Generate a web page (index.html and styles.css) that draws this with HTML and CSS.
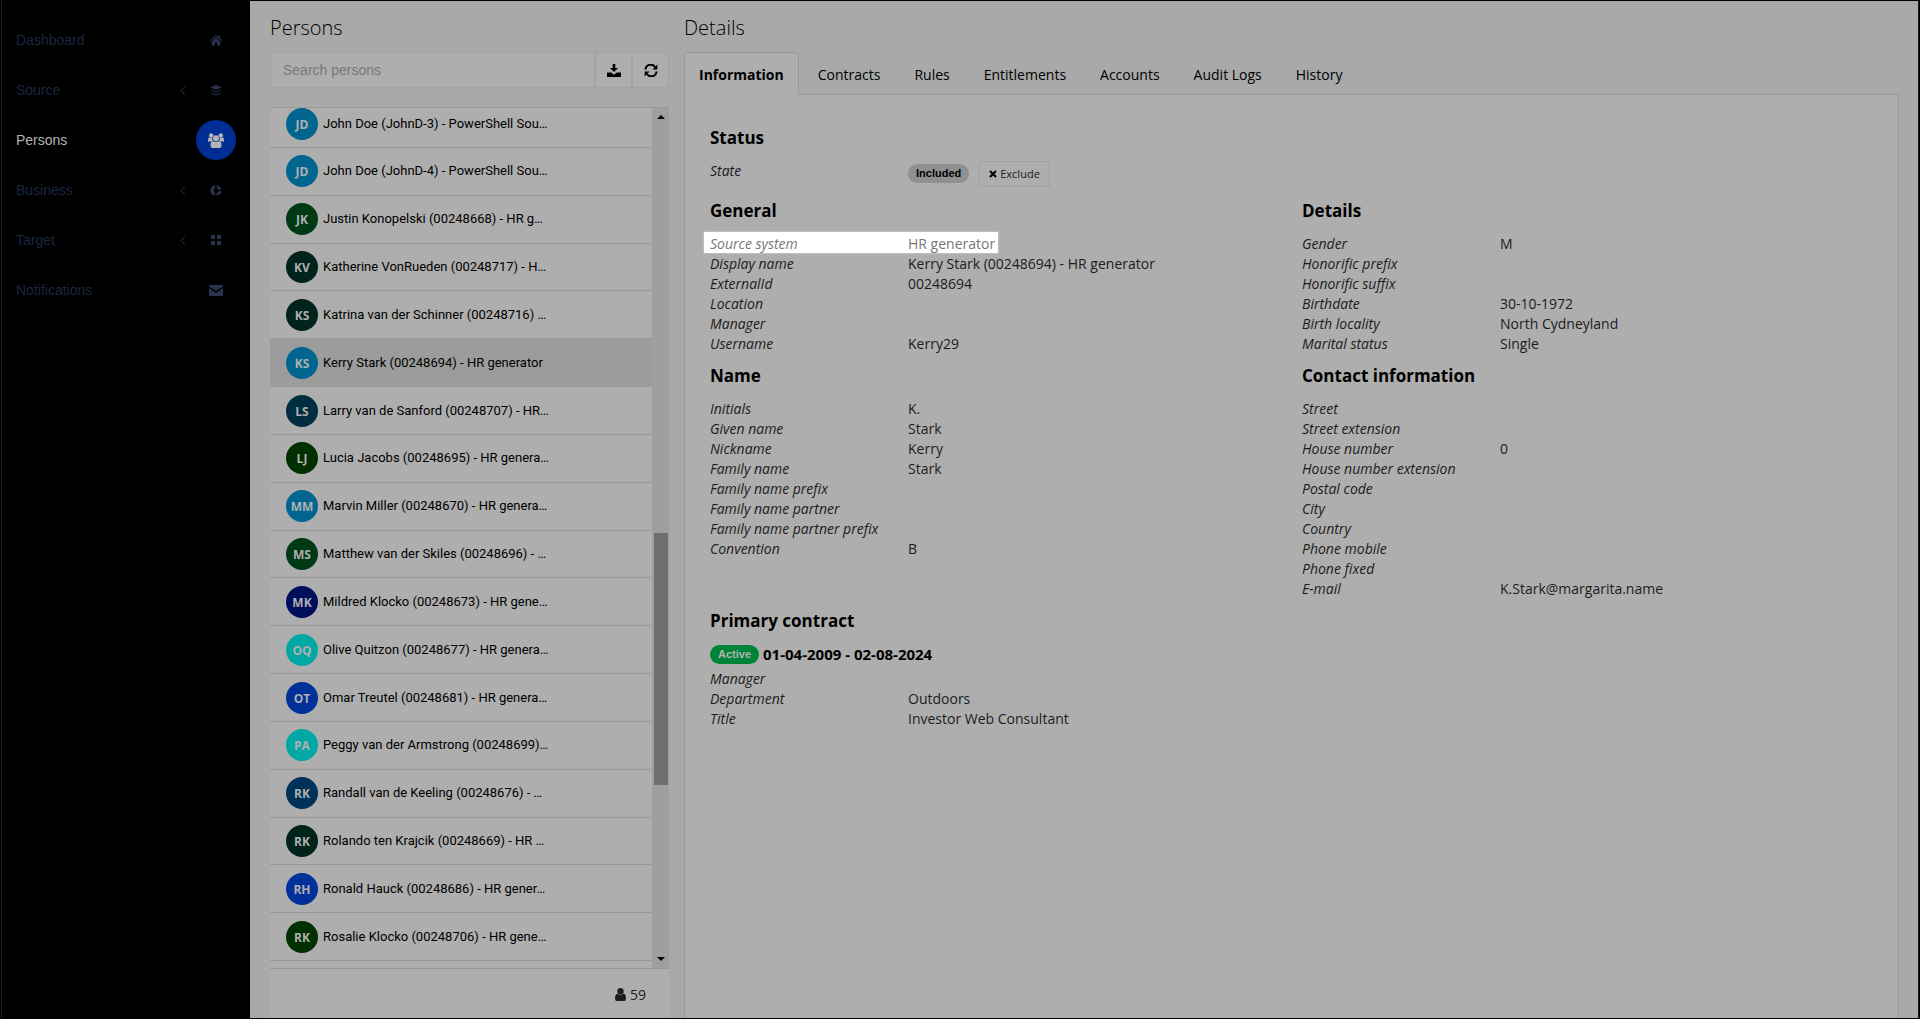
FILE: index.html
```
<!DOCTYPE html>
<html lang="en">
<head>
  <meta charset="UTF-8">
  <meta name="viewport" content="width=device-width, initial-scale=1.0">
  <title>Persons</title>
  <link rel="stylesheet" href="styles.css">
</head>
<body>
  <div class="app">
    <nav class="sidebar">
      <a href="#" class="nav-item">
        <span class="nav-label">Dashboard</span>
        <span class="nav-icon"><svg width="12" height="11" viewBox="0 0 12 11"><path d="M6 0 0 5.2l.8.9L6 1.7l5.2 4.4.8-.9-2-1.7V.6H8.400v1.500z"/><path d="M6 2.700 1.800 6.200V10.500h3V7.400h2.400v3.100h3V6.200z"/></svg></span>
      </a>
      <a href="#" class="nav-item">
        <span class="nav-label">Source</span>
        <svg class="chevron" width="6" height="9" viewBox="0 0 6 9"><path d="M5 .5 1 4.500l4 4"/></svg>
        <span class="nav-icon"><svg width="12" height="11" viewBox="0 0 12 11"><path d="M6 0 .5 2.400 6 4.800l5.500-2.400z"/><path class="line" d="M1 5l5 2.200L11 5M1 7.800 6 10l5-2.200"/></svg></span>
      </a>
      <a href="#" class="nav-item active">
        <span class="nav-label">Persons</span>
        <span class="nav-icon"><svg width="16" height="15" viewBox="0 0 16 15"><circle cx="3.200" cy="2.400" r="2.200"/><circle cx="12.800" cy="2.400" r="2.200"/><path d="M0 8.500V6.500Q0 4.500 2 4.500h2.200Q3.800 7 5.300 8.500zM16 8.500V6.500Q16 4.500 14 4.500h-2.200Q12.200 7 10.700 8.500z"/><circle cx="8" cy="5.200" r="3"/><path d="M2.500 12.500C2.500 9.500 3.500 8.200 5 8.200q3 1.600 6 0c1.500 0 2.500 1.300 2.500 4.300Q13.500 15 11.500 15h-7Q2.500 15 2.500 12.500z"/></svg></span>
      </a>
      <a href="#" class="nav-item">
        <span class="nav-label">Business</span>
        <svg class="chevron" width="6" height="9" viewBox="0 0 6 9"><path d="M5 .5 1 4.500l4 4"/></svg>
        <span class="nav-icon"><svg width="12" height="11" viewBox="0 0 12 11"><path d="M5.200.2v3Q3.800 4 3.800 5.500T5.200 7.800v3Q.3 9.800.3 5.500T5.200.2zM6.600.2q4.200.6 4.900 4.500H8.600Q8 3.600 6.600 3.200zM11.500 6.300q-.7 3.900-4.900 4.500v-3Q8 7.400 8.600 6.300z"/></svg></span>
      </a>
      <a href="#" class="nav-item">
        <span class="nav-label">Target</span>
        <svg class="chevron" width="6" height="9" viewBox="0 0 6 9"><path d="M5 .5 1 4.500l4 4"/></svg>
        <span class="nav-icon"><svg width="10" height="10" viewBox="0 0 10 10"><path d="M0 0h4v4H0zM6 0h4v4H6zM0 6h4v4H0zM6 6h4v4H6z"/></svg></span>
      </a>
      <a href="#" class="nav-item">
        <span class="nav-label">Notifications</span>
        <span class="nav-icon"><svg width="14" height="11" viewBox="0 0 14 11"><path d="M0 0h14v1.500L7 6 0 1.500zM0 3l7 4.700L14 3v8H0z"/></svg></span>
      </a>
    </nav>

    <section class="persons">
      <h2>Persons</h2>
      <div class="search">
        <input type="text" placeholder="Search persons" aria-label="Search persons">
        <button type="button" aria-label="Download"><svg width="14" height="13" viewBox="0 0 14 13"><path d="M5.700 0h2.600v4H11L7 8 3 4h2.700zM0 8.500h4.200L7 10.800l2.800-2.300H14V13H0z"/></svg></button>
        <button type="button" aria-label="Refresh"><svg width="14" height="13" viewBox="0 0 14 13"><path class="line" d="M1.500 5.500A5.200 5.200 0 0 1 11 3M12.500 7.500A5.200 5.200 0 0 1 3 10"/><path d="M13.300.5v5H8.500zM.7 12.500v-5h4.800z"/></svg></button>
      </div>
      <div class="list-box">
        <ul class="list">
          <li><span class="avatar sky">JD</span>John Doe (JohnD-3) - PowerShell Sou…</li>
          <li><span class="avatar sky">JD</span>John Doe (JohnD-4) - PowerShell Sou…</li>
          <li><span class="avatar green">JK</span>Justin Konopelski (00248668) - HR g…</li>
          <li><span class="avatar pine">KV</span>Katherine VonRueden (00248717) - H…</li>
          <li><span class="avatar pine">KS</span>Katrina van der Schinner (00248716) …</li>
          <li class="selected"><span class="avatar sky">KS</span>Kerry Stark (00248694) - HR generator</li>
          <li><span class="avatar petrol">LS</span>Larry van de Sanford (00248707) - HR…</li>
          <li><span class="avatar forest">LJ</span>Lucia Jacobs (00248695) - HR genera…</li>
          <li><span class="avatar sky">MM</span>Marvin Miller (00248670) - HR genera…</li>
          <li><span class="avatar green">MS</span>Matthew van der Skiles (00248696) - …</li>
          <li><span class="avatar navy">MK</span>Mildred Klocko (00248673) - HR gene…</li>
          <li><span class="avatar aqua">OQ</span>Olive Quitzon (00248677) - HR genera…</li>
          <li><span class="avatar blue">OT</span>Omar Treutel (00248681) - HR genera…</li>
          <li><span class="avatar aqua">PA</span>Peggy van der Armstrong (00248699)…</li>
          <li><span class="avatar steel">RK</span>Randall van de Keeling (00248676) - …</li>
          <li><span class="avatar pine">RK</span>Rolando ten Krajcik (00248669) - HR …</li>
          <li><span class="avatar blue">RH</span>Ronald Hauck (00248686) - HR gener…</li>
          <li><span class="avatar forest">RK</span>Rosalie Klocko (00248706) - HR gene…</li>
        </ul>
        <div class="scrollbar">
          <svg width="8" height="4" viewBox="0 0 8 4"><path d="M4 0 8 4H0z"/></svg>
          <div class="track"><div class="thumb"></div></div>
          <svg width="8" height="4" viewBox="0 0 8 4"><path d="M0 0h8L4 4z"/></svg>
        </div>
      </div>
      <div class="count">
        <svg width="11" height="13" viewBox="0 0 11 13"><circle cx="5.500" cy="3.200" r="3.200"/><path d="M0 10.500Q0 6 2.600 5.800q2.900 2.200 5.800 0Q11 6 11 10.500 11 13 9 13H2Q0 13 0 10.500z"/></svg>
        59
      </div>
    </section>

    <main class="details">
      <h2>Details</h2>
      <div class="tabs">
        <button type="button" class="tab active">Information</button>
        <button type="button" class="tab">Contracts</button>
        <button type="button" class="tab">Rules</button>
        <button type="button" class="tab">Entitlements</button>
        <button type="button" class="tab">Accounts</button>
        <button type="button" class="tab">Audit Logs</button>
        <button type="button" class="tab">History</button>
      </div>
      <div class="panel">
        <div class="column">
          <h3>Status</h3>
          <dl class="status">
            <div><dt>State</dt><dd><span class="badge included">Included</span><button type="button" class="exclude"><svg width="8" height="8" viewBox="0 0 8 8"><path d="M1 1l6 6M7 1 1 7"/></svg>Exclude</button></dd></div>
          </dl>
        </div>
        <div class="row">
          <div class="column">
            <h3>General</h3>
            <dl>
              <div class="highlight"><dt>Source system</dt><dd>HR generator</dd></div>
              <div><dt>Display name</dt><dd>Kerry Stark (00248694) - HR generator</dd></div>
              <div><dt>ExternalId</dt><dd>00248694</dd></div>
              <div><dt>Location</dt><dd></dd></div>
              <div><dt>Manager</dt><dd></dd></div>
              <div><dt>Username</dt><dd>Kerry29</dd></div>
            </dl>
            <h3>Name</h3>
            <dl>
              <div><dt>Initials</dt><dd>K.</dd></div>
              <div><dt>Given name</dt><dd>Stark</dd></div>
              <div><dt>Nickname</dt><dd>Kerry</dd></div>
              <div><dt>Family name</dt><dd>Stark</dd></div>
              <div><dt>Family name prefix</dt><dd></dd></div>
              <div><dt>Family name partner</dt><dd></dd></div>
              <div><dt>Family name partner prefix</dt><dd></dd></div>
              <div><dt>Convention</dt><dd>B</dd></div>
            </dl>
          </div>
          <div class="column">
            <h3>Details</h3>
            <dl>
              <div><dt>Gender</dt><dd>M</dd></div>
              <div><dt>Honorific prefix</dt><dd></dd></div>
              <div><dt>Honorific suffix</dt><dd></dd></div>
              <div><dt>Birthdate</dt><dd>30-10-1972</dd></div>
              <div><dt>Birth locality</dt><dd>North Cydneyland</dd></div>
              <div><dt>Marital status</dt><dd>Single</dd></div>
            </dl>
            <h3>Contact information</h3>
            <dl>
              <div><dt>Street</dt><dd></dd></div>
              <div><dt>Street extension</dt><dd></dd></div>
              <div><dt>House number</dt><dd>0</dd></div>
              <div><dt>House number extension</dt><dd></dd></div>
              <div><dt>Postal code</dt><dd></dd></div>
              <div><dt>City</dt><dd></dd></div>
              <div><dt>Country</dt><dd></dd></div>
              <div><dt>Phone mobile</dt><dd></dd></div>
              <div><dt>Phone fixed</dt><dd></dd></div>
              <div><dt>E-mail</dt><dd>K.Stark@margarita.name</dd></div>
            </dl>
          </div>
        </div>
        <div class="row">
          <div class="column">
            <h3>Primary contract</h3>
            <div class="contract"><span class="badge success">Active</span>01-04-2009 - 02-08-2024</div>
            <dl>
              <div><dt>Manager</dt><dd></dd></div>
              <div><dt>Department</dt><dd>Outdoors</dd></div>
              <div><dt>Title</dt><dd>Investor Web Consultant</dd></div>
            </dl>
          </div>
        </div>
      </div>
    </main>
  </div>
</body>
</html>
```

FILE: styles.css
```
* {
  margin: 0;
  padding: 0;
  box-sizing: border-box;
}
body {
  background-color: #000;
  color: #1c1c1c;
  font-family: "Segoe UI", "Open Sans", sans-serif;
  font-size: 14px;
  line-height: 20px;
}
button,
input {
  font: inherit;
  color: inherit;
  background: none;
  border: none;
}
svg {
  fill: currentColor;
  flex: none;
}
.app {
  display: flex;
  height: 100vh;
  border: 1px solid #000;
  background-color: #a9a9a9;
}

/* sidebar */
.sidebar {
  flex: 0 0 249px;
  padding: 14px 14px 0;
  background-color: #000;
  border-left: 1px solid #222;
  font-family: "Liberation Sans", Arial, sans-serif;
}
.nav-item {
  display: flex;
  align-items: center;
  height: 50px;
  color: #1b2640;
  text-decoration: none;
}
.nav-label {
  flex: 1;
}
.nav-icon {
  display: flex;
  align-items: center;
  justify-content: center;
  width: 40px;
  height: 40px;
  border-radius: 50%;
  color: #28324a;
}
.nav-icon .line {
  fill: none;
  stroke: currentColor;
}
.chevron {
  fill: none;
  stroke: #2a3654;
  margin-right: 10px;
}
.nav-item.active {
  color: #b4b4b4;
}
.active .nav-icon {
  background-color: #002e94;
  color: #b4b4b4;
}

/* persons list */
h2 {
  height: 51px;
  padding-top: 12px;
  color: #000;
  font-size: 20px;
  font-weight: 300;
  line-height: 30px;
}
.persons {
  flex: 0 0 434px;
  display: flex;
  flex-direction: column;
  padding: 0 15px 0 20px;
}
.search {
  display: flex;
  height: 36px;
  margin-bottom: 19px;
}
.search input,
.search button {
  background-color: #aeaeae;
  border: 1px solid #a3a3a3;
  border-radius: 2px;
}
.search input {
  flex: 1;
  min-width: 0;
  padding: 0 12px;
  font-family: "Liberation Sans", Arial, sans-serif;
}
.search input::placeholder {
  color: #787878;
}
.search button {
  display: flex;
  align-items: center;
  justify-content: center;
  width: 37px;
  color: #000;
}
.search .line {
  fill: none;
  stroke: currentColor;
  stroke-width: 2;
}
.list-box {
  flex: 1;
  display: flex;
  min-height: 0;
  border-top: 1px solid #999;
  border-bottom: 1px solid #999;
}
.list {
  flex: 1;
  display: flex;
  flex-direction: column;
  padding-bottom: 7px;
  background-color: #aeaeae;
  list-style: none;
}
.list li {
  flex: 1;
  display: flex;
  align-items: center;
  gap: 5px;
  padding-left: 16px;
  border-bottom: 1px solid #999;
  color: #000;
  font-family: Roboto, sans-serif;
  font-size: 13px;
}
.list li:first-child {
  flex: 0 0 40px;
  align-items: flex-end;
  padding-bottom: 7px;
  line-height: 32px;
}
.list li.selected {
  background-color: #9c9c9c;
}
.list .avatar {
  width: 32px;
  height: 32px;
  border-radius: 50%;
  color: #b0b0b0;
  font-family: "Open Sans", sans-serif;
  font-size: 12px;
  font-weight: 700;
  line-height: 34px;
  text-align: center;
}
.sky { background-color: #00668f; }
.green { background-color: #003a15; }
.pine { background-color: #00231b; }
.petrol { background-color: #002d3f; }
.forest { background-color: #003000; }
.navy { background-color: #000f5c; }
.aqua { background-color: #00a8a5; }
.blue { background-color: #00309a; }
.steel { background-color: #003159; }
.scrollbar {
  display: flex;
  flex-direction: column;
  align-items: center;
  width: 17px;
  padding: 7px 0;
  background-color: #9f9f9f;
  color: #000;
}
.track {
  flex: 1;
  display: flex;
  flex-direction: column;
  padding-bottom: 172px;
}
.thumb {
  width: 14px;
  height: 252px;
  margin-top: auto;
  background-color: #6f6f6f;
}
.count {
  display: flex;
  align-items: center;
  justify-content: flex-end;
  gap: 4px;
  height: 49px;
  padding: 2px 23px 0 0;
  background-color: #aeaeae;
}

/* details */
.details {
  flex: 1;
  display: flex;
  flex-direction: column;
  padding-right: 19px;
  border-right: 1px solid #0d1830;
}
.tabs {
  display: flex;
  gap: 4px;
  color: #000;
}
.tab {
  height: 42px;
  padding: 2px 14px 0;
  border: 1px solid transparent;
  border-bottom: none;
}
.tab.active {
  position: relative;
  margin-bottom: -1px;
  height: 43px;
  background-color: #aeaeae;
  border-color: #999;
  border-radius: 4px 4px 0 0;
  font-weight: 700;
}
.panel {
  flex: 1;
  padding: 31px 4px 0 25px;
  background-color: #aeaeae;
  border: 1px solid #999;
  border-bottom: none;
}
.row {
  display: grid;
  grid-template-columns: 1fr 1fr;
}
h3 {
  margin-bottom: 11px;
  color: #000;
  font-size: 17px;
  font-weight: 700;
  line-height: 24px;
}
dl {
  margin-bottom: 10px;
}
dl > div {
  display: grid;
  grid-template-columns: 198px 1fr;
}
dt {
  font-style: italic;
}
.status dd {
  display: flex;
  align-items: flex-start;
  gap: 10px;
  height: 28px;
}
.status .badge {
  margin-top: 3px;
}
.badge {
  height: 19px;
  padding: 0 8px;
  border-radius: 10px;
  font-family: "Liberation Sans", Arial, sans-serif;
  font-size: 11px;
  font-weight: 700;
  line-height: 19px;
}
.included {
  background-color: #909090;
  color: #000;
}
.success {
  background-color: #008437;
  color: #b4b4b4;
}
.exclude {
  display: flex;
  align-items: center;
  gap: 3px;
  height: 26px;
  padding: 0 9px;
  border: 1px solid #a0a0a0;
  border-radius: 2px;
  font-size: 11px;
}
.exclude svg {
  stroke: #000;
  stroke-width: 2;
}
.highlight {
  position: relative;
  z-index: 0;
  color: #777;
}
.highlight::before {
  content: "";
  position: absolute;
  z-index: -1;
  top: -2px;
  left: -6px;
  width: 294px;
  height: 21px;
  background-color: #fff;
  box-shadow: 0 0 2px #ddd;
}
.contract {
  display: flex;
  align-items: center;
  gap: 4px;
  margin-bottom: 5px;
  color: #000;
  font-size: 15px;
  font-weight: 700;
}
```
